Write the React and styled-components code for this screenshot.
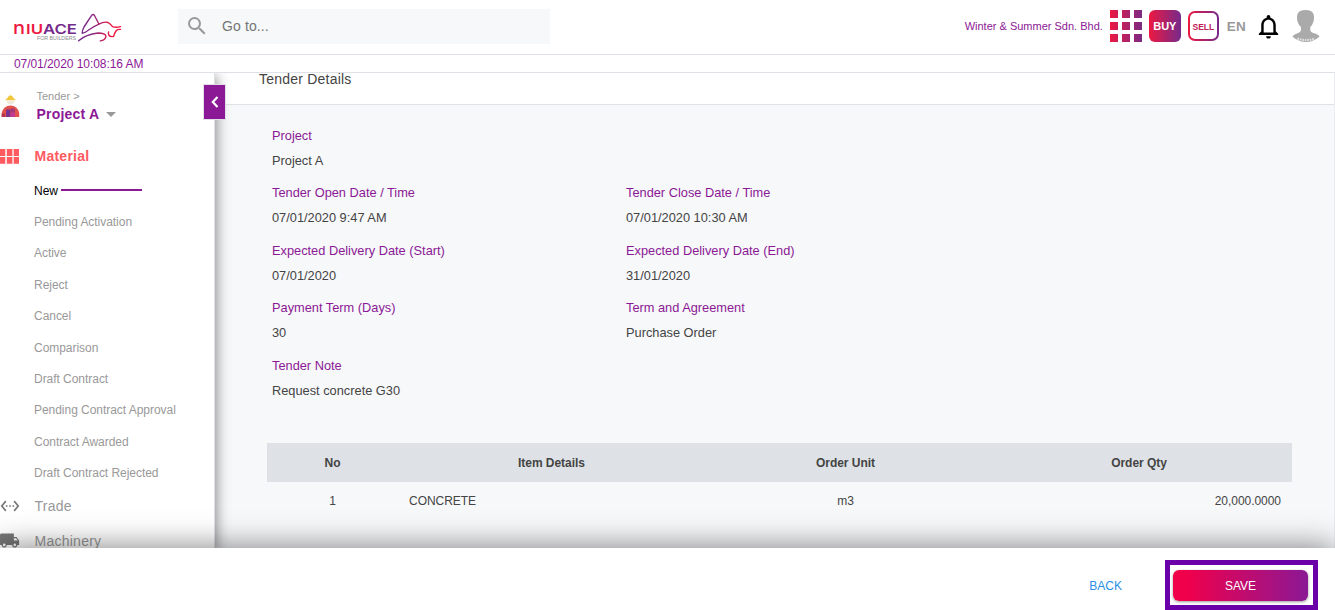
import React from 'react';
import styled, { createGlobalStyle } from 'styled-components';
import { MdSearch, MdNotificationsNone, MdSettingsEthernet, MdLocalShipping } from 'react-icons/md';

const purple = '#8b1895';
const line = '#dee2e6';

const GlobalStyle = createGlobalStyle`
  * { box-sizing: border-box; }
  body { margin: 0; background: #fff; font-family: "Liberation Sans", Arial, sans-serif; }
`;

const Page = styled.div`
  display: flex;
  flex-direction: column;
  width: 100%;
  height: 610px;
  overflow: hidden;
`;

const Header = styled.header`
  display: flex;
  align-items: center;
  flex: 0 0 55px;
  padding: 0 15px 2px 12px;
  border-bottom: 1px solid ${line};
`;

const LogoSlot = styled.div`
  width: 166px;
  height: 34px;
`;

const SearchBox = styled.div`
  display: flex;
  align-items: center;
  width: 372px;
  height: 35px;
  padding-left: 7px;
  gap: 13px;
  background: #f6f8fa;
  color: #757575;
  font-size: 14px;
  letter-spacing: 0.12px;
  svg { color: #999; }
`;

const HeaderRight = styled.div`
  display: flex;
  align-items: center;
  margin-left: auto;
`;

const Company = styled.span`
  color: ${purple};
  font-size: 11px;
  white-space: nowrap;
`;

const AppsGrid = styled.div`
  display: grid;
  grid-template-columns: repeat(3, 8px);
  grid-auto-rows: 8px;
  gap: 4px;
  margin-left: 7px;
`;

const AppCell = styled.i`
  background: linear-gradient(90deg, #ed1941, #7b2a85) ${(p) => -p.$col * 12}px 0 / 32px 8px;
`;

const BuyBadge = styled.div`
  width: 32px;
  height: 32px;
  margin-left: 7px;
  border-radius: 6px;
  background: linear-gradient(90deg, #ed1941, #762a8b);
  color: #fff;
  font: bold 11px/33px "Liberation Sans", Arial, sans-serif;
  text-align: center;
`;

const SellBadge = styled.div`
  width: 31px;
  height: 30px;
  margin-left: 7px;
  border: 2px solid transparent;
  border-radius: 7px;
  background: linear-gradient(#fff, #fff) padding-box, linear-gradient(90deg, #ed1941, #762a8b) border-box;
  color: #c02058;
  font: bold 8.5px/28px "Liberation Sans", Arial, sans-serif;
  text-align: center;
`;

const Language = styled.span`
  margin-left: 8px;
  color: #999;
  font-size: 13.5px;
  font-weight: bold;
  letter-spacing: 0.2px;
`;

const Bell = styled(MdNotificationsNone)`
  margin-left: 8px;
`;

const Avatar = styled.svg`
  margin-left: 9px;
`;

const Clock = styled.div`
  flex: 0 0 18px;
  padding: 1px 0 0 14px;
  border-bottom: 1px solid ${line};
  color: ${purple};
  font-size: 12px;
  line-height: 16px;
  letter-spacing: -0.06px;
`;

const Body = styled.div`
  display: flex;
  flex: 0 0 475px;
  position: relative;
  overflow: hidden;
`;

const Sidebar = styled.aside`
  position: relative;
  z-index: 1;
  flex: 0 0 215px;
  height: 475px;
  background: #fff;
  border-right: 1px solid ${line};
  box-shadow: 2px 3px 12px rgba(0, 0, 0, 0.42);
`;

const Toggle = styled.button`
  position: absolute;
  top: 11px;
  left: 203px;
  display: flex;
  align-items: center;
  justify-content: center;
  width: 23px;
  height: 36px;
  padding: 0;
  border: 1px solid #e3dfe9;
  background: ${purple};
`;

const ProjectPicker = styled.div`
  display: flex;
  height: 64px;
  padding-top: 17px;
`;

const WorkerSlot = styled.div`
  width: 36.5px;
  padding-top: 4px;
`;

const Crumb = styled.div`
  color: #999;
  font-size: 11px;
  line-height: 13px;
`;

const ProjectName = styled.div`
  display: flex;
  align-items: center;
  gap: 7px;
  color: ${purple};
  font-size: 14px;
  font-weight: bold;
  line-height: 22px;
  letter-spacing: 0.22px;
`;

const Caret = styled.i`
  border: 5px solid transparent;
  border-top-color: #999;
  border-bottom: 0;
`;

const Group = styled.div`
  display: flex;
  align-items: center;
  gap: ${(p) => (p.$active ? 15.5 : 14.5)}px;
  height: ${(p) => p.$height}px;
  color: ${(p) => (p.$active ? '#ff5a5f' : '#999')};
  font-size: 14px;
  font-weight: ${(p) => (p.$active ? 'bold' : 'normal')};
  letter-spacing: 0.25px;
  svg { color: ${(p) => (p.$active ? '#ff5a5f' : '#777')}; }
`;

const Truck = styled(MdLocalShipping)`
  margin-left: -1px;
`;

const SubItem = styled.div`
  display: flex;
  align-items: center;
  height: 31.4px;
  padding-left: 34px;
  color: ${(p) => (p.$active ? '#000' : '#999')};
  font-size: 12px;
  letter-spacing: -0.04px;
  &::after {
    content: '';
    display: ${(p) => (p.$active ? 'block' : 'none')};
    width: 81px;
    height: 2px;
    margin: -2px 0 0 3px;
    background: ${purple};
  }
`;

const Content = styled.main`
  flex: 1;
  background: #f7f8fa;
  border-right: 1px solid #e9ebee;
`;

const Title = styled.div`
  height: 32px;
  padding-left: 44px;
  background: #fff;
  border-bottom: 1px solid ${line};
  color: #444;
  font-size: 14px;
  line-height: 13px;
  letter-spacing: 0.22px;
`;

const Details = styled.dl`
  display: grid;
  grid-template-columns: 354px 354px;
  grid-auto-rows: 57px 58px;
  margin: 18px 0 0 57px;
  height: 320px;
`;

const Field = styled.div`
  grid-column: ${(p) => p.$col};
  font-size: 12.8px;
  line-height: 25px;
`;

const Label = styled.dt`
  color: ${purple};
`;

const Value = styled.dd`
  margin: 0;
  color: #444;
`;

const Table = styled.div`
  width: 1025px;
  margin-left: 52px;
  color: #444;
  font-size: 12px;
  letter-spacing: -0.04px;
`;

const Row = styled.div`
  display: grid;
  grid-template-columns: 131px 307px 281px 306px;
  height: 39px;
  line-height: ${(p) => (p.$head ? 40 : 38)}px;
  background: ${(p) => (p.$head ? '#dee2e6' : 'transparent')};
  font-weight: ${(p) => (p.$head ? 'bold' : 'normal')};
`;

const Cell = styled.div`
  padding: 0 11px;
  text-align: ${(p) => p.$align || 'center'};
`;

const Footer = styled.footer`
  position: relative;
  z-index: 2;
  display: flex;
  align-items: center;
  justify-content: flex-end;
  flex: 0 0 62px;
  padding: 12px 17px 0 0;
  background: #fff;
  box-shadow: 0 0 32px rgba(0, 0, 0, 0.52);
`;

const BackButton = styled.button`
  padding: 1px 0 0;
  margin-right: 43px;
  border: 0;
  background: none;
  color: #2a8fe6;
  font: 12px "Liberation Sans", Arial, sans-serif;
`;

const Highlight = styled.div`
  width: 153px;
  height: 50px;
  padding: 5px 3px;
  border: 5px solid #6a00a8;
`;

const SaveButton = styled.button`
  display: block;
  width: 135px;
  height: 31px;
  padding: 0;
  border: 0;
  border-radius: 6px;
  background: linear-gradient(90deg, #f0004b 10%, ${purple});
  box-shadow: 0 1px 3px rgba(0, 0, 0, 0.4);
  color: #fff;
  font: 12px "Liberation Sans", Arial, sans-serif;
`;

const Logo = () => (
  <svg width="112" height="34" viewBox="12 9 112 34" fill="none">
    <defs>
      <linearGradient id="bird" gradientUnits="userSpaceOnUse" x1="80" y1="0" x2="112" y2="0">
        <stop offset="0" stopColor="#762a8b" />
        <stop offset="0.4" stopColor="#8b2a80" />
        <stop offset="1" stopColor="#ed1941" />
      </linearGradient>
    </defs>
    <g fontFamily="Inter, sans-serif" fontWeight="600">
      <text x="13" y="34.3" fill="#ed1941" fontSize="18" fontWeight="500" textLength="12" lengthAdjust="spacingAndGlyphs">n</text>
      <text x="26" y="34.3" fill="#ed1941" fontSize="13.5" textLength="17" lengthAdjust="spacingAndGlyphs">IU</text>
      <text x="43" y="34.3" fill="#762a8b" fontSize="13.5" textLength="34" lengthAdjust="spacingAndGlyphs">ACE</text>
    </g>
    <text x="37" y="40.2" fill="#888" fontFamily="Liberation Sans, sans-serif" fontSize="5.2" textLength="39" lengthAdjust="spacingAndGlyphs">FOR BUILDERS</text>
    <g stroke="url(#bird)" strokeWidth="1.4" strokeLinecap="round" strokeLinejoin="round">
      <path d="M99 24.200 94.600 15.700Q93 13.300 91.300 15.800L84 27Q82 31 82.200 33.200 84.500 33.200 89 29.800 94 26.300 99 24.200 104 21.300 108 22.500 110.500 24 112.500 26.600 116 28 120.500 26.600" />
      <path d="M120.500 29.400Q117.500 29.200 116.300 30.500 114.600 33 113.600 36.300 110.300 37.300 108.800 35 108 33.500 108.600 32" />
      <path d="M78.600 40.700Q86 34.300 98 33 105.500 33 106 36.300 105.200 40.200 100.300 40.900" />
    </g>
  </svg>
);

const Worker = () => (
  <svg width="20" height="24" viewBox="0 0 20 24">
    <path d="M5 6.200 7.500 4Q8.500 1.300 10.500 1.300T13.500 4L16 6.200Z" fill="#f0c63a" />
    <path d="M7 6.800h7v2.200q-3.500 3-7 0z" fill="#f1e8dc" />
    <path d="M1.700 23V19Q3.500 11.500 10.500 11.500T19.200 19v4Z" fill="#e0534b" />
    <path d="M6 15.500h4.500V23H6z" fill="#7b318e" />
    <path d="M10.500 18.500H15V23h-4.500z" fill="#c33a98" />
    <path d="M10.500 14.500H15v4h-4.500z" fill="#a8377a" />
    <path d="M1.700 19.500H5V23H1.700z" fill="#b3364c" />
  </svg>
);

const Blocks = () => (
  <svg width="19" height="15" viewBox="0 0 19 15" fill="currentColor">
    <path d="M0 0h5.300v7H0zM6.800 0h5.600v7H6.800zM13.700 0H19v7h-5.300zM0 8h5.300v6.700H0zM6.800 8h5.600v6.700H6.800zM13.700 8H19v6.700h-5.300z" />
  </svg>
);

const subItems = [
  'New', 'Pending Activation', 'Active', 'Reject', 'Cancel', 'Comparison', 'Draft Contract',
  'Pending Contract Approval', 'Contract Awarded', 'Draft Contract Rejected',
];

const fields = [
  ['Project', 'Project A', 1],
  ['Tender Open Date / Time', '07/01/2020 9:47 AM', 1],
  ['Tender Close Date / Time', '07/01/2020 10:30 AM', 2],
  ['Expected Delivery Date (Start)', '07/01/2020', 1],
  ['Expected Delivery Date (End)', '31/01/2020', 2],
  ['Payment Term (Days)', '30', 1],
  ['Term and Agreement', 'Purchase Order', 2],
  ['Tender Note', 'Request concrete G30', 1],
];

export default function App() {
  return (
    <Page>
      <GlobalStyle />
      <Header>
        <LogoSlot><Logo /></LogoSlot>
        <SearchBox><MdSearch size={24} />Go to...</SearchBox>
        <HeaderRight>
          <Company>Winter &amp; Summer Sdn. Bhd.</Company>
          <AppsGrid>
            {[0, 1, 2, 3, 4, 5, 6, 7, 8].map((n) => <AppCell key={n} $col={n % 3} />)}
          </AppsGrid>
          <BuyBadge>BUY</BuyBadge>
          <SellBadge>SELL</SellBadge>
          <Language>EN</Language>
          <Bell size={29} />
          <Avatar width="28" height="32" viewBox="0 0 28 32">
            <path d="M5.500 4Q7 0 13.500 0T21.500 4Q22.500 8 21.500 11.500 20.500 15 18.300 17V20.500Q19 22.500 23 23.500 26.500 24.500 27.600 26.500 24 30 19.500 31.300 14 32.600 8.500 31.300 4 30 .400 26.500 1.500 24.500 5 23.500 8.500 22.500 9 20.500V17Q6.500 15 5.500 11.500 4.500 8 5.500 4Z" fill="#aaa" />
            <path d="M5.500 28.500q8.500 3 17 0" fill="none" stroke="#e8e8e8" strokeWidth="2" strokeDasharray="1.500 1" />
          </Avatar>
        </HeaderRight>
      </Header>
      <Clock>07/01/2020 10:08:16 AM</Clock>
      <Body>
        <Sidebar>
          <ProjectPicker>
            <WorkerSlot><Worker /></WorkerSlot>
            <div>
              <Crumb>Tender &gt;</Crumb>
              <ProjectName>Project A<Caret /></ProjectName>
            </div>
          </ProjectPicker>
          <Group $active $height={38}><Blocks />Material</Group>
          {subItems.map((s, i) => <SubItem key={s} $active={i === 0}>{s}</SubItem>)}
          <Group $height={35}><MdSettingsEthernet size={20} />Trade</Group>
          <Group $height={34}><Truck size={21} />Machinery</Group>
          <Toggle>
            <svg width="8" height="12" viewBox="0 0 8 12" fill="none" stroke="#fff" strokeWidth="2.200"><path d="M6.500 1 1.800 6l4.700 5" /></svg>
          </Toggle>
        </Sidebar>
        <Content>
          <Title>Tender Details</Title>
          <Details>
            {fields.map(([l, v, c]) => (
              <Field key={l} $col={c}><Label>{l}</Label><Value>{v}</Value></Field>
            ))}
          </Details>
          <Table>
            <Row $head><Cell>No</Cell><Cell>Item Details</Cell><Cell>Order Unit</Cell><Cell>Order Qty</Cell></Row>
            <Row><Cell>1</Cell><Cell $align="left">CONCRETE</Cell><Cell>m3</Cell><Cell $align="right">20,000.0000</Cell></Row>
          </Table>
        </Content>
      </Body>
      <Footer>
        <BackButton>BACK</BackButton>
        <Highlight><SaveButton>SAVE</SaveButton></Highlight>
      </Footer>
    </Page>
  );
}
